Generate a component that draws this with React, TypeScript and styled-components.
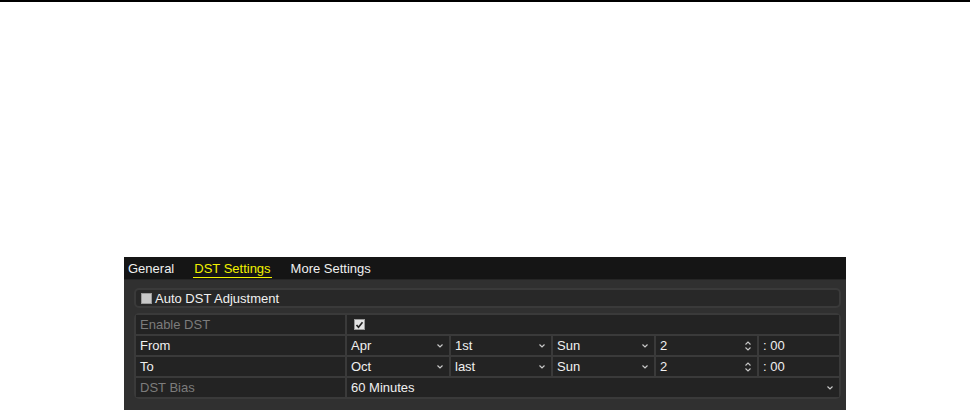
import React from 'react';
import styled, { createGlobalStyle } from 'styled-components';

const GlobalStyle = createGlobalStyle`
  html, body {
    margin: 0;
    padding: 0;
    background: #ffffff;
  }
  body {
    font-family: 'Liberation Sans', Arial, sans-serif;
  }
`;

const Page = styled.div`
  width: 970px;
  height: 410px;
  overflow: hidden;
  box-sizing: border-box;
  border-top: 2px solid #000;
  padding: 255px 0 0 124px;
`;

const Panel = styled.div`
  width: 722px;
  height: 160px;
  background: #303030;
  font-size: 13px;
`;

const TabBar = styled.div`
  height: 22px;
  background: #151515;
  display: flex;
  align-items: center;
  gap: 18px;
  padding-left: 3px;
  border-bottom: 1px solid #262626;
`;

const Tab = styled.span<{ $active?: boolean }>`
  color: ${(p) => (p.$active ? '#f2f200' : '#f0f0f0')};
  line-height: 16px;
  padding: 0 1px;
  border-bottom: 1px solid ${(p) => (p.$active ? '#f2f200' : 'transparent')};
  margin-top: 3px;
`;

const Body = styled.div`
  padding: 8px 5px 0 10px;
  display: flex;
  flex-direction: column;
  gap: 5px;
`;

const AutoBox = styled.div`
  height: 16px;
  border: 2px solid #3a3a3a;
  border-radius: 5px;
  background: #282828;
  display: flex;
  align-items: center;
  padding-left: 5px;
  gap: 3px;
  color: #f0f0f0;
`;

const Check = styled.span<{ $checked?: boolean }>`
  width: 11px;
  height: 11px;
  box-sizing: border-box;
  background: ${(p) => (p.$checked ? '#e4e4e4' : '#c8c8c8')};
  border: 1px solid #9a9a9a;
  display: inline-flex;
  align-items: center;
  justify-content: center;
`;

const Table = styled.div`
  background: #3a3a3a;
  border-radius: 5px;
  padding: 2px;
  display: flex;
  flex-direction: column;
  gap: 2px;
`;

const Row = styled.div`
  height: 19px;
  display: grid;
  grid-template-columns: 209px 1fr;
  gap: 2px;
`;

const Label = styled.div<{ $dim?: boolean }>`
  background: #232323;
  color: ${(p) => (p.$dim ? '#7c7c7c' : '#f0f0f0')};
  display: flex;
  align-items: center;
  padding-left: 4px;
`;

const Values = styled.div`
  display: flex;
  gap: 2px;
`;

const Cell = styled.div<{ $w?: number }>`
  background: #232323;
  color: #f0f0f0;
  display: flex;
  align-items: center;
  justify-content: space-between;
  padding: 0 6px 0 4px;
  ${(p) => (p.$w ? `width: ${p.$w}px; flex: none;` : 'flex: 1;')}
  box-sizing: border-box;
`;

const Chevron = () => (
  <svg width="6" height="4" viewBox="0 0 6 4">
    <polyline points="0.5,0.5 3,3 5.5,0.5" fill="none" stroke="#c8c8c8" strokeWidth="1.2" />
  </svg>
);

const Spinner = () => (
  <svg width="6" height="10" viewBox="0 0 6 10">
    <polyline points="0.5,3.5 3,1 5.5,3.5" fill="none" stroke="#c8c8c8" strokeWidth="1.1" />
    <polyline points="0.5,6.5 3,9 5.5,6.5" fill="none" stroke="#c8c8c8" strokeWidth="1.1" />
  </svg>
);

const Tick = () => (
  <svg width="9" height="8" viewBox="0 0 9 8">
    <polyline points="1.5,4 3.5,6.2 7.5,1.3" fill="none" stroke="#222" strokeWidth="1.7" />
  </svg>
);

const DateRow = ({ label, month, week }: { label: string; month: string; week: string }) => (
  <Row>
    <Label>{label}</Label>
    <Values>
      <Cell $w={102}>{month}<Chevron /></Cell>
      <Cell $w={100}>{week}<Chevron /></Cell>
      <Cell $w={101}>Sun<Chevron /></Cell>
      <Cell $w={101}>2<Spinner /></Cell>
      <Cell>: 00</Cell>
    </Values>
  </Row>
);

const App: React.FC = () => {
  return (
    <>
      <GlobalStyle />
      <Page>
        <Panel>
          <TabBar>
            <Tab>General</Tab>
            <Tab $active>DST Settings</Tab>
            <Tab>More Settings</Tab>
          </TabBar>
          <Body>
            <AutoBox>
              <Check />
              Auto DST Adjustment
            </AutoBox>
            <Table>
              <Row>
                <Label $dim>Enable DST</Label>
                <Values>
                  <Cell style={{ paddingLeft: 7 }}>
                    <Check $checked>
                      <Tick />
                    </Check>
                  </Cell>
                </Values>
              </Row>
              <DateRow label="From" month="Apr" week="1st" />
              <DateRow label="To" month="Oct" week="last" />
              <Row>
                <Label $dim>DST Bias</Label>
                <Values>
                  <Cell>60 Minutes<Chevron /></Cell>
                </Values>
              </Row>
            </Table>
          </Body>
        </Panel>
      </Page>
    </>
  );
};

export default App;
